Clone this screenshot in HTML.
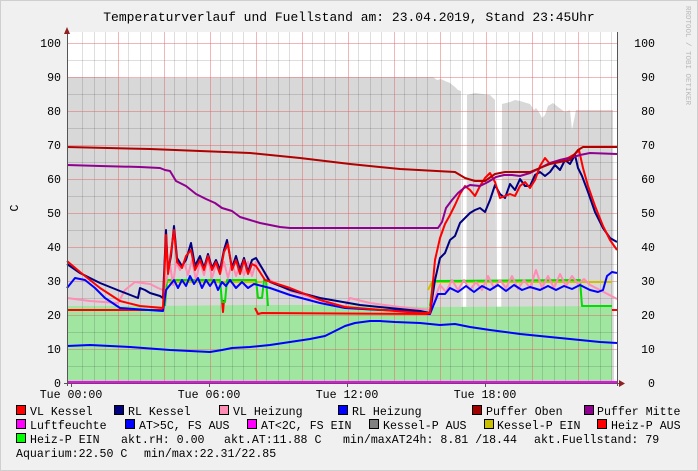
<!DOCTYPE html>
<html><head><meta charset="utf-8"><style>
html,body{margin:0;padding:0;}
body{width:698px;height:471px;overflow:hidden;background:#f0f0f0;}
svg{display:block;}
text{font-family:"Liberation Mono","DejaVu Sans Mono",monospace;}
</style></head><body>
<svg width="698" height="471" viewBox="0 0 698 471" xmlns="http://www.w3.org/2000/svg">
<rect x="0.5" y="0.5" width="697" height="470" fill="#f0f0f0" stroke="#cfcfcf"/>
<text x="349" y="21" font-size="13" text-anchor="middle" fill="#000">Temperaturverlauf und Fuellstand am: 23.04.2019, Stand 23:45Uhr</text>
<text transform="translate(686,6) rotate(90)" font-size="7.5" fill="#b8b8b8">RRDTOOL / TOBI OETIKER</text>
<!-- plot bg -->
<rect x="67" y="32" width="550" height="351" fill="#ffffff"/>
<!-- fuel gray area -->
<polygon fill="#d8d8d8" points="67,383 67,77 100,77 130,78 200,78 300,77 400,77 433,77 437,80 441,79 445,81 450,83 455,87 458,90 461,91 462,383 466,383 467,95 475,93 490,95 495,100 497,383 501,383 502,104 510,102 515,100 520,101 530,104 534,110 536,108 539,112 542,118 545,115 548,106 553,103 558,107 565,112 570,110 572,130 574,120 576,110 590,110 613,110 614,383"/>
<!-- green area -->
<polygon fill="#a0e6a0" points="67,383 67,306 150,306 250,305 350,305 430,307 440,307 612,306 612,383"/>
<!-- grid minor -->
<g stroke="#000" stroke-opacity="0.13" stroke-width="1">
<path d="M82.5 32V383M94.5 32V383M105.5 32V383M128.5 32V383M140.5 32V383M151.5 32V383M174.5 32V383M186.5 32V383M197.5 32V383M220.5 32V383M232.5 32V383M243.5 32V383M266.5 32V383M278.5 32V383M289.5 32V383M312.5 32V383M324.5 32V383M335.5 32V383M358.5 32V383M370.5 32V383M381.5 32V383M404.5 32V383M416.5 32V383M427.5 32V383M450.5 32V383M462.5 32V383M473.5 32V383M496.5 32V383M508.5 32V383M519.5 32V383M542.5 32V383M554.5 32V383M565.5 32V383M588.5 32V383M600.5 32V383M611.5 32V383"/>
<path d="M67 60.5H617M67 94.5H617M67 128.5H617M67 162.5H617M67 196.5H617M67 230.5H617M67 264.5H617M67 298.5H617M67 332.5H617M67 366.5H617"/>
</g>
<g stroke="#e06060" stroke-opacity="0.45" stroke-width="1">
<path d="M118.5 32V383M164.5 32V383M210.5 32V383M256.5 32V383M302.5 32V383M348.5 32V383M394.5 32V383M440.5 32V383M486.5 32V383M532.5 32V383M578.5 32V383"/>
<path d="M67 43.5H617M67 77.5H617M67 111.5H617M67 145.5H617M67 179.5H617M67 213.5H617M67 247.5H617M67 281.5H617M67 315.5H617M67 349.5H617"/>
</g>
<g fill="none" stroke-width="2" stroke-linejoin="round">
<!-- AT -->
<polyline stroke="#0000ff" points="67,346 90,345 130,347 170,350 190,351 210,352 222,350 232,348 250,347 270,345 290,342 310,339 325,336 335,331 345,326 355,323 370,321 380,321 395,322 420,323 440,325 455,324 470,327 490,330 520,334 540,336 560,338 580,340 600,342 617,343"/>
<!-- Heiz-P AUS red flat -->
<polyline stroke="#ff0000" points="67,310 163,310"/>
<polyline stroke="#ff0000" points="222,300 223,312 224,300"/>
<polyline stroke="#ff0000" points="255,308 258,314 262,313 430,314"/>
<polyline stroke="#ff0000" points="612,310 617,310"/>
<!-- Kessel-P EIN yellow -->
<polyline stroke="#d0c000" points="165,282 262,282"/>
<polyline stroke="#d0c000" points="428,290 432,282 612,282"/>
<!-- Heiz-P EIN green -->
<polyline stroke="#00e000" points="165,306 167,280 220,280 222,302 225,302 227,280 256,280 258,298 262,298 264,280 266,280 268,306"/>
<polyline stroke="#00e000" points="430,306 433,281 580,280 582,306 612,306"/>
<!-- VL Heizung pink -->
<polyline stroke="#ff8cb4" points="67,298 90,301 118,303 125,290 135,282 150,284 158,288 163,290 166,282 170,264 173,285 176,262 180,270 184,262 188,275 192,260 196,280 200,262 204,275 208,258 212,278 216,265 220,274 224,262 228,278 232,262 236,276 240,264 244,275 248,262 252,276 256,262 262,268 270,280 290,291 320,300 345,307 350,298 370,303 400,307 430,310 440,285 446,292 452,280 458,290 464,280 470,290 476,282 482,290 488,276 494,288 500,280 506,288 512,276 518,289 524,280 530,288 536,270 542,288 548,276 554,288 560,274 566,286 572,276 578,284 584,279 590,285 600,290 617,299"/>
<!-- RL Heizung blue -->
<polyline stroke="#0000ff" points="67,288 75,278 85,280 95,288 105,298 120,308 163,311 166,290 170,285 174,280 178,288 182,280 186,286 190,276 194,284 198,278 202,288 206,280 210,286 214,280 218,290 222,282 226,286 230,280 236,288 242,282 248,288 254,284 262,286 270,288 290,295 320,303 345,308 380,310 420,311 430,314 438,294 445,294 450,288 458,292 466,286 474,292 482,286 490,290 498,285 506,291 514,285 522,290 530,287 540,290 548,286 556,290 564,286 572,289 580,285 590,290 598,292 603,290 607,276 612,272 617,273"/>
<!-- RL Kessel navy -->
<polyline stroke="#000080" points="67,264 80,273 100,283 120,291 138,298 140,288 145,290 150,293 160,296 163,298 166,230 168,272 171,256 174,226 177,258 182,266 186,260 191,243 195,266 200,256 204,268 208,254 212,268 216,260 220,270 224,250 227,240 232,268 236,256 240,270 244,258 248,272 252,260 256,258 262,268 270,282 290,290 320,298 360,305 420,311 430,313 435,280 440,258 445,253 450,240 455,236 460,223 465,218 470,213 475,210 480,208 485,212 490,200 495,185 500,194 505,198 510,184 515,190 520,179 525,186 530,186 535,175 540,172 545,176 550,172 555,165 560,170 565,160 570,164 575,155 578,168 582,176 588,192 595,212 603,228 610,238 617,242"/>
<!-- VL Kessel red -->
<polyline stroke="#ff0000" points="67,261 80,272 100,288 120,301 140,306 163,308 166,235 168,274 171,252 174,230 177,262 182,268 186,256 191,250 195,270 200,260 204,270 208,256 212,270 216,262 220,274 224,252 228,244 232,270 236,260 240,274 244,260 248,274 252,264 256,266 265,280 290,288 320,300 345,307 420,313 430,313 435,260 440,238 445,224 450,215 455,205 460,194 465,186 470,190 475,196 480,186 485,178 490,173 495,182 500,198 505,196 510,194 515,196 520,186 525,182 530,188 535,180 540,166 545,158 550,164 555,162 560,160 568,158 575,154 579,150 583,168 588,186 595,206 603,226 610,240 617,250"/>
<!-- Puffer Mitte purple -->
<polyline stroke="#900090" points="67,165 100,166 140,167 160,168 165,170 170,171 176,181 186,186 196,194 206,199 215,203 222,208 232,211 240,217 250,220 260,223 270,225 280,227 290,228 438,228 442,222 446,208 452,200 458,193 464,188 470,185 480,186 488,182 496,177 504,175 512,175 520,176 530,173 540,168 550,163 560,160 570,158 580,155 590,153 617,154"/>
<!-- Puffer Oben dark red -->
<polyline stroke="#b00000" points="67,147 150,149 250,153 300,158 350,164 400,169 455,172 465,178 475,181 485,181 495,174 505,172 530,172 540,168 550,164 570,160 578,150 583,147 617,147"/>
</g>
<!-- Luftfeuchte magenta at 0 -->
<rect x="67" y="381" width="550" height="3" fill="#ff00ff"/>
<!-- axes -->
<path d="M67.5 30V386" stroke="#555" stroke-width="1"/>
<path d="M64 383.5H620" stroke="#555" stroke-width="1"/>
<path d="M617.5 32V386" stroke="#555" stroke-width="1"/>
<polygon points="64,34 70,34 67,27" fill="#902020"/>
<polygon points="619,380 619,387 625,383.5" fill="#902020"/>
<g stroke="#555"><path d="M71.5 383V387M209.5 383V387M347.5 383V387M485.5 383V387"/></g>
<!-- axis labels -->
<g font-size="11.6" fill="#000">
<g text-anchor="end">
<text x="61" y="47">100</text><text x="61" y="81">90</text><text x="61" y="115">80</text><text x="61" y="149">70</text><text x="61" y="183">60</text><text x="61" y="217">50</text><text x="61" y="251">40</text><text x="61" y="285">30</text><text x="61" y="319">20</text><text x="61" y="353">10</text><text x="61" y="387">0</text>
<text x="655" y="47">100</text><text x="655" y="81">90</text><text x="655" y="115">80</text><text x="655" y="149">70</text><text x="655" y="183">60</text><text x="655" y="217">50</text><text x="655" y="251">40</text><text x="655" y="285">30</text><text x="655" y="319">20</text><text x="655" y="353">10</text><text x="655" y="387">0</text>
</g>
<text transform="translate(18,208) rotate(-90)" text-anchor="middle">C</text>
<g text-anchor="middle">
<text x="71" y="398">Tue 00:00</text><text x="209" y="398">Tue 06:00</text><text x="347" y="398">Tue 12:00</text><text x="485" y="398">Tue 18:00</text>
</g>
</g>
<!-- legend -->
<g stroke="#000" stroke-width="1">
<rect x="16.5" y="405.5" width="9" height="9" fill="#ff0000"/>
<rect x="114.5" y="405.5" width="9" height="9" fill="#000080"/>
<rect x="219.5" y="405.5" width="9" height="9" fill="#ff8cb4"/>
<rect x="338.5" y="405.5" width="9" height="9" fill="#0000ff"/>
<rect x="472.5" y="405.5" width="9" height="9" fill="#a00000"/>
<rect x="584.5" y="405.5" width="9" height="9" fill="#900090"/>
<rect x="16.5" y="419.5" width="9" height="9" fill="#ff00ff"/>
<rect x="125.5" y="419.5" width="9" height="9" fill="#0000ff"/>
<rect x="247.5" y="419.5" width="9" height="9" fill="#ff00ff"/>
<rect x="369.5" y="419.5" width="9" height="9" fill="#808080"/>
<rect x="484.5" y="419.5" width="9" height="9" fill="#c8c000"/>
<rect x="597.5" y="419.5" width="9" height="9" fill="#ff0000"/>
<rect x="16.5" y="433.5" width="9" height="9" fill="#00ff00"/>
</g>
<g font-size="11.6" fill="#000" xml:space="preserve">
<text x="30" y="415">VL Kessel</text>
<text x="128" y="415">RL Kessel</text>
<text x="233" y="415">VL Heizung</text>
<text x="352" y="415">RL Heizung</text>
<text x="486" y="415">Puffer Oben</text>
<text x="597" y="415">Puffer Mitte</text>
<text x="30" y="429">Luftfeuchte</text>
<text x="139" y="429">AT&gt;5C, FS AUS</text>
<text x="261" y="429">AT&lt;2C, FS EIN</text>
<text x="383" y="429">Kessel-P AUS</text>
<text x="497" y="429">Kessel-P EIN</text>
<text x="611" y="429">Heiz-P AUS</text>
<text x="30" y="443">Heiz-P EIN</text>
<text x="121" y="443">akt.rH: 0.00</text>
<text x="224" y="443">akt.AT:11.88 C</text>
<text x="343" y="443">min/maxAT24h: 8.81 /18.44</text>
<text x="534" y="443">akt.Fuellstand:   79</text>
<text x="16" y="457">Aquarium:22.50 C</text>
<text x="144" y="457">min/max:22.31/22.85</text>
</g>
</svg>
</body></html>
